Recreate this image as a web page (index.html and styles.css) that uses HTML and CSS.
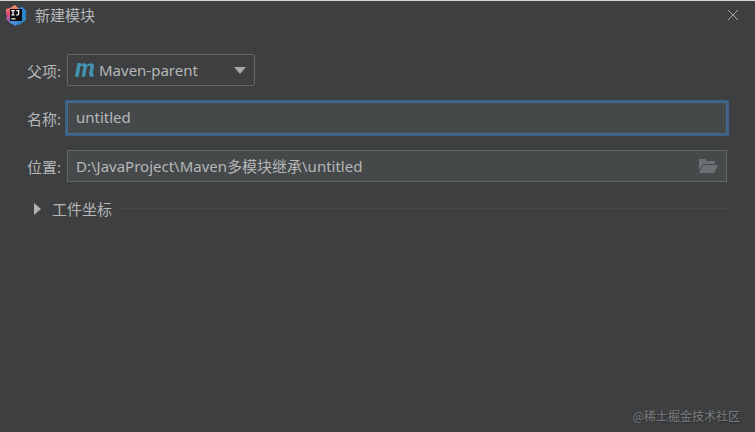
FILE: index.html
```
<!DOCTYPE html>
<html lang="zh-CN">
<head>
  <meta charset="UTF-8" />
  <title>新建模块</title>
  <link rel="stylesheet" href="styles.css">
</head>
<body>

  <header class="titlebar">
    <svg class="logo" viewBox="0 0 22 22" aria-hidden="true">
      <defs>
        <linearGradient id="warm" x1="0" y1="0" x2="0" y2="1">
          <stop offset="0" stop-color="#f0a070" />
          <stop offset="0.45" stop-color="#e8506e" />
          <stop offset="1" stop-color="#8a5fd0" />
        </linearGradient>
      </defs>
      <path fill="#2a86c8" d="M13 4l5-1 3 4v9l-7 5-5-1z" />
      <path fill="url(#warm)" d="M1 5l4-1 5-3 4 4-2 14-7 0-4-4 1-3-1-2z" />
      <path fill="#4a90dc" d="M5 17h8l-2 5-6-3z" />
      <path fill="#0c0a0c" d="M5 5h12v12H5z" />
      <path fill="none" stroke="#fff" stroke-width="1.2" d="M6.3 6.7h3.4M8 6.7v4.2M6.3 11h3.4M11.3 6.7h2.4v3q0 1.3-1.2 1.3h-1.4M6.3 14.8h4.2" />
    </svg>
    <h1>新建模块</h1>
    <button class="close" type="button" aria-label="关闭">
      <svg viewBox="0 0 12 12"><path d="M1 1l10 10M11 1L1 11" /></svg>
    </button>
  </header>

  <main>
    <form class="module-form">
      <label for="parent">父项:</label>
      <div class="select-box">
        <svg class="maven" viewBox="0 0 20 16" aria-hidden="true">
          <path d="M2.4 1h3.7l-.3 1.7C7.2 1 10.6.3 11.9 3 13.7.7 19.6.1 19 4.8L17.8 11q-.2 1.3 1.2 1.1l-.5 2.5c-2.8.8-4.9-.3-4.4-3L15.200 5.400c.4-2.3-3-2-3.500.4L10.100 14.800H6.600L8.200 5.400c.4-2.300-2.500-2-3 .4L3.600 14.800H0z" />
        </svg>
        <select id="parent">
          <option>Maven-parent</option>
        </select>
        <svg class="arrow" viewBox="0 0 12 7" aria-hidden="true"><path d="M0 0h12L6 7z" /></svg>
      </div>

      <label for="name">名称:</label>
      <input class="field name" id="name" type="text" value="untitled">

      <label for="location">位置:</label>
      <div class="field location">
        <input id="location" type="text" value="D:\JavaProject\Maven多模块继承\untitled">
        <button class="browse" type="button" aria-label="浏览">
          <svg viewBox="0 0 20 16">
            <path d="M1 12V1h6l2 2h8v3H5z" />
            <path d="M5 7h15l-4 8H1z" />
          </svg>
        </button>
      </div>
    </form>

    <div class="section">
      <button class="toggle" type="button" aria-expanded="false">
        <svg viewBox="0 0 7 12" aria-hidden="true"><path d="M0 0l7 6-7 6z" /></svg>
        工件坐标
      </button>
      <hr>
    </div>
  </main>

  <footer class="watermark">@稀土掘金技术社区</footer>

</body>
</html>
```
FILE: styles.css
```
* {
  box-sizing: border-box;
}

body {
  display: flex;
  flex-direction: column;
  min-height: 100vh;
  margin: 0;
  border-top: 1px solid #d8d8d8;
  background-color: #3d3f41;
  color: #b5b7b8;
  font-family: "Noto Sans", "Noto Sans CJK SC", sans-serif;
  font-size: 15px;
}

button, input, select {
  margin: 0;
  padding: 0;
  border: 0;
  background: none;
  color: inherit;
  font: inherit;
  outline: none;
}

svg {
  display: block;
}

.titlebar {
  display: flex;
  align-items: center;
  height: 27px;
  padding: 0 16px 0 5px;
}

.logo {
  width: 22px;
  height: 22px;
}

h1 {
  flex: 1;
  margin: 0 0 0 8px;
  font-size: 15px;
  font-weight: normal;
}

.close svg {
  width: 12px;
  height: 12px;
  fill: none;
  stroke: #a4a6a7;
}

main {
  flex: 1;
  padding: 26px 28px 0 27px;
}

.module-form {
  display: grid;
  grid-template-columns: 40px 1fr;
  grid-auto-rows: 32px;
  gap: 16px 0;
  align-items: center;
}

.select-box {
  position: relative;
  width: 188px;
  height: 32px;
}

.select-box select {
  width: 100%;
  height: 100%;
  padding-left: 31px;
  border: 1px solid #646668;
  border-radius: 2px;
  appearance: none;
}

.maven {
  position: absolute;
  top: 8px;
  left: 8px;
  width: 20px;
  height: 16px;
  fill: #4293b0;
}

.arrow {
  position: absolute;
  top: 13px;
  right: 9px;
  width: 12px;
  height: 7px;
  fill: #a5a7a8;
}

.field {
  width: 100%;
  height: 32px;
  border: 1px solid #646868;
  background-color: #45494a;
}

.name {
  padding: 0 8px 2px;
  border-color: #466d94;
  box-shadow: 0 0 0 2px #3d6185;
}

.location {
  display: flex;
  align-items: center;
  padding: 0 8px;
}

.location input {
  flex: 1;
  min-width: 0;
  padding-bottom: 2px;
}

.browse svg {
  width: 20px;
  height: 16px;
  fill: #6c7072;
}

.section {
  display: flex;
  align-items: center;
  gap: 8px;
  margin-top: 16px;
  padding-left: 7px;
}

.toggle {
  display: flex;
  align-items: center;
  gap: 11px;
}

.toggle svg {
  width: 7px;
  height: 12px;
  fill: #b0b2b3;
}

hr {
  flex: 1;
  margin: 0;
  border: 0;
  border-top: 1px solid #474a4c;
}

.watermark {
  padding: 0 15px 8px;
  color: #7b7d7f;
  font-family: "Noto Sans CJK SC", sans-serif;
  font-size: 12px;
  text-align: right;
  text-shadow: 1px 1px 1px #2c2e30;
}
```
